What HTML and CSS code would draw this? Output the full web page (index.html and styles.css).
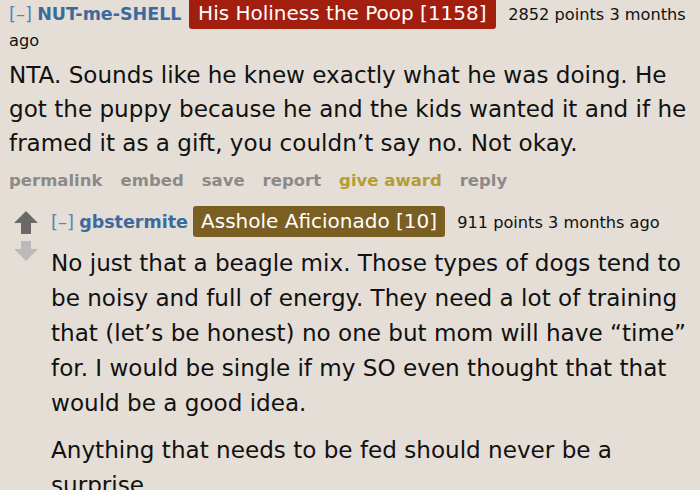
FILE: index.html
```html
<!DOCTYPE html>
<html>
<head>
<meta charset="utf-8">
<link rel="stylesheet" href="styles.css">
</head>
<body>
<div class="comment">
  <div class="tagline">
    <span class="expand">[–]</span> <span class="author">NUT-me-SHELL</span> <span class="flair flair-red">His Holiness the Poop [1158]</span> <span class="score">2852 points 3 months</span> <span class="score">ago</span>
  </div>
  <div class="body main-body">
    <p>NTA. Sounds like he knew exactly what he was doing. He got the puppy because he and the kids wanted it and if he framed it as a gift, you couldn’t say no. Not okay.</p>
  </div>
  <ul class="buttons">
    <li>permalink</li>
    <li>embed</li>
    <li>save</li>
    <li>report</li>
    <li class="award">give award</li>
    <li>reply</li>
  </ul>
  <div class="child">
    <div class="votes">
      <svg class="arrow" width="24" height="24" viewBox="0 0 24 24"><path d="M12 1 L24 13 L17 13 L17 24 L7 24 L7 13 L0 13 Z" fill="#6b6968"/></svg>
      <svg class="arrow" width="24" height="20" viewBox="0 0 24 20"><path d="M7 0 L17 0 L17 8 L24 8 L12 20 L0 8 L7 8 Z" fill="#bcbab8"/></svg>
    </div>
    <div class="entry">
      <div class="tagline reply-tagline">
        <span class="expand">[–]</span> <span class="author">gbstermite</span> <span class="flair flair-brown">Asshole Aficionado [10]</span> <span class="score">911 points 3 months ago</span>
      </div>
      <div class="body reply-body">
        <p>No just that a beagle mix. Those types of dogs tend to be noisy and full of energy. They need a lot of training that (let’s be honest) no one but mom will have “time” for. I would be single if my SO even thought that that would be a good idea.</p>
        <p>Anything that needs to be fed should never be a surprise.</p>
      </div>
    </div>
  </div>
</div>
</body>
</html>
```
FILE: styles.css
```css
html, body {
  margin: 0;
  padding: 0;
  background: #e4ded7;
  overflow: hidden;
}
body {
  font-family: "DejaVu Sans", Verdana, sans-serif;
  color: #111;
  width: 700px;
  height: 490px;
}
.comment {
  padding-left: 9px;
  padding-right: 6px;
}
.tagline {
  font-size: 16px;
  line-height: 26px;
}
.expand {
  color: #5a84b0;
  font-size: 18px;
}
.author {
  color: #3c6a9e;
  font-weight: bold;
  font-size: 17.5px;
}
.flair {
  color: #fff;
  font-size: 20px;
  border-radius: 3px;
  padding: 3px 9.5px 4px 9.5px;
  margin-left: 2px;
  margin-right: 7px;
}
.flair-red {
  background: #a21e0e;
}
.flair-brown {
  background: #7b5e22;
}
.score {
  color: #111;
  font-size: 16.2px;
}
.body {
  font-size: 23.1px;
}
.body p {
  margin: 0;
}
.main-body {
  line-height: 34px;
  margin-top: 4px;
}
.buttons {
  list-style: none;
  margin: 8px 0 0 0;
  padding: 0;
  display: flex;
  gap: 18px;
  font-size: 16.5px;
  font-weight: bold;
  color: #8c8a88;
  line-height: 26px;
}
.buttons .award {
  color: #b59c33;
}
.child {
  display: flex;
  margin-top: 14px;
}
.votes {
  width: 42px;
  box-sizing: border-box;
  flex: none;
  display: flex;
  flex-direction: column;
  gap: 7px;
  padding-left: 5px;
  padding-top: 2px;
}
.arrow {
  display: block;
}
.reply-tagline .flair {
  margin-left: 0;
  padding: 3px 8px 4px 8px;
}
.reply-body {
  line-height: 35px;
  margin-top: 10px;
}
.reply-body p + p {
  margin-top: 12px;
}
```
